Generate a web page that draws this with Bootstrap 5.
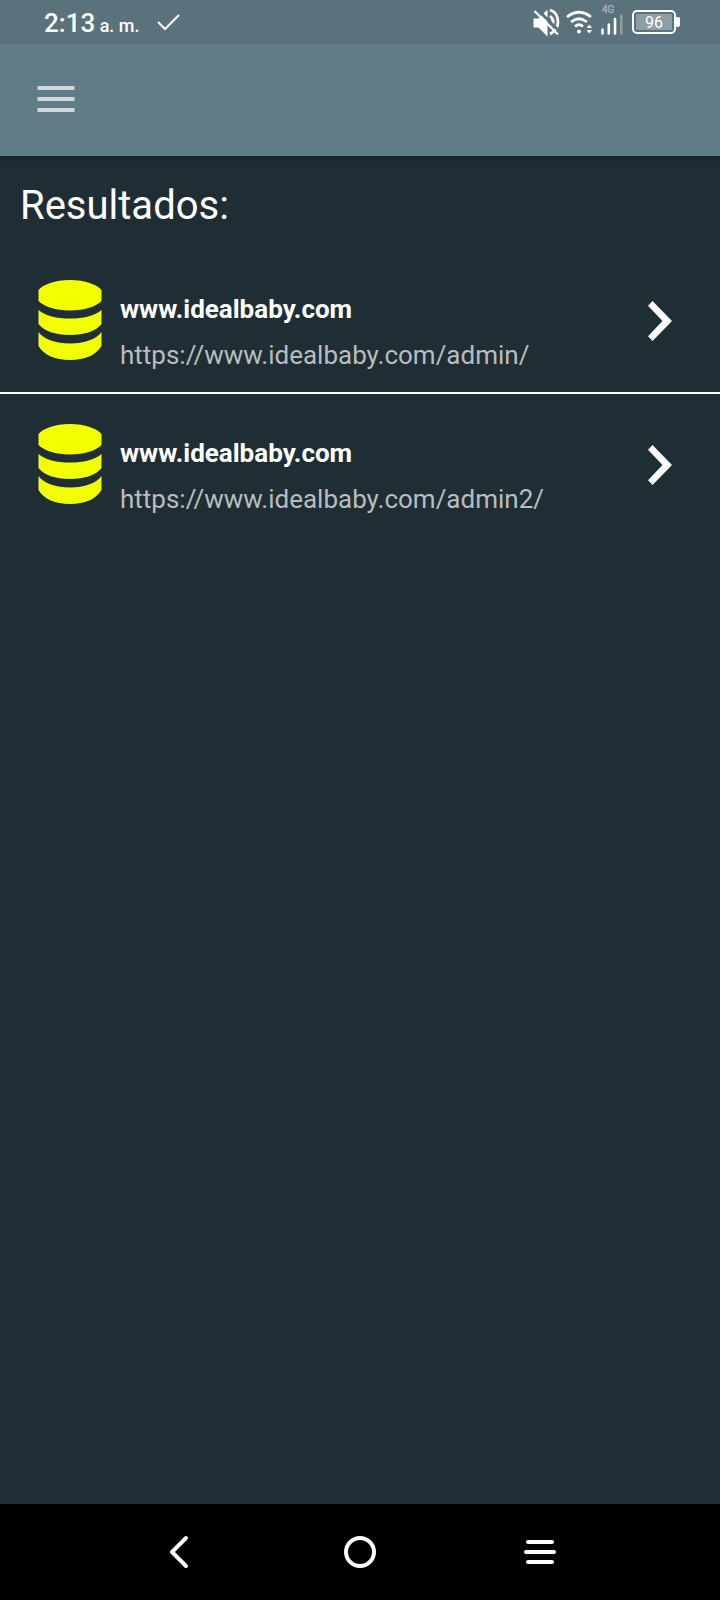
<!DOCTYPE html>
<html lang="es">
<head>
<meta charset="utf-8">
<meta name="viewport" content="width=device-width, initial-scale=1">
<title>Resultados</title>
<link href="https://cdn.jsdelivr.net/npm/bootstrap@5.3.0/dist/css/bootstrap.min.css" rel="stylesheet">
<style>
  body { font-family: Roboto, "Liberation Sans", sans-serif; background: #1f2d34; color: #fff; }
  svg { display: block; flex: none; }
  .status-bar { height: 44px; padding: 0 40px 0 44px; background: #5a727b; }
  .clock { font-size: 26px; line-height: 44px; font-weight: 500; padding-top: 4px; }
  .clock-suffix { font-size: 18px; }
  .battery-text { font-size: 16px; }
  .signal-text { font-size: 10px; }
  .app-bar { height: 112px; padding: 0 32px; background: #607d87; box-shadow: 0 3px 3px #0003; }
  .heading { font-size: 40px; line-height: 48px; padding: 26px 20px 20px; }
  .result { height: 142px; padding: 0 48px 0 38px; gap: 18px; font-size: 26px; line-height: 46px; }
  .result-text { padding-top: 22px; }
  .result-title { font-weight: 700; }
  .result-url { color: #b8bdbf; }
  .results > li + li { border-top: 2px solid #fff; }
  .nav-bar { height: 96px; background: #000; }
</style>
</head>
<body class="d-flex flex-column min-vh-100">

<div class="status-bar d-flex align-items-center justify-content-between">
  <div class="d-flex align-items-center gap-3">
    <div class="clock">2:13<span class="clock-suffix"> a. m.</span></div>
    <svg width="26" height="20" viewBox="0 0 26 20" fill="none" stroke="#fff" stroke-width="2" aria-hidden="true"><path d="M2 10l7 7L23 3"/></svg>
  </div>
  <svg width="148" height="36" viewBox="0 0 148 36" fill="none" stroke="#fff" role="img" aria-label="Silencio, Wi-Fi, 4G, batería 96">
    <g>
      <path d="M1.500 14.500h5l9-9v27l-9-9h-5z" fill="#fff" stroke="none"/>
      <path d="M18 6c5 1.500 8 6 8 12 0 5-2.500 9-8 12" stroke-width="2.800"/>
      <path d="M18 12c2 1.500 3.200 3.500 3.200 6 0 1.500-.4 3-1.200 4" stroke-width="2.800"/>
      <path d="M5 5l23.500 23.500" stroke="#5a727b" stroke-width="3"/>
      <path d="M2.500 7l23.500 23.500" stroke-width="2.200"/>
    </g>
    <path d="M35 13q12-9.500 24 0M39 18q8-6.500 16 0M43 22.500q4-3.500 8 0" stroke-width="2.700"/>
    <circle cx="47" cy="27.500" r="2" fill="#fff" stroke="none"/>
    <path d="M54.500 24l2.800-3.500 2.800 3.500zM54.500 26l2.800 3.500 2.800-3.500z" fill="#fff" stroke="none"/>
    <text class="signal-text" x="70" y="9" fill="#a3b0b5" stroke="#a3b0b5" stroke-width=".4">4G</text>
    <path d="M70.500 29.500v-4M76.800 29.500v-9M83 29.500V15" stroke-width="2.600" stroke-linecap="round"/>
    <path d="M89.300 29.500V11.500" stroke="#8d9ca2" stroke-width="2.600" stroke-linecap="round"/>
    <rect x="101" y="7" width="42" height="22" rx="4" stroke-width="2"/>
    <rect x="104" y="10" width="36" height="16" rx="1" fill="#8d9ea5" stroke="none"/>
    <path d="M144 13h2q2 0 2 2v6q0 2-2 2h-2z" fill="#fff" stroke="none"/>
    <text class="battery-text" x="113" y="24" fill="#fff" stroke="none">96</text>
  </svg>
</div>

<header class="app-bar d-flex align-items-center">
  <button type="button" class="btn p-0 border-0" aria-label="Menú">
    <svg width="48" height="48" viewBox="0 0 48 48" fill="#cfd8db"><path d="M5.500 10h37v4h-37zM5.500 21h37v4h-37zM5.500 32h37v4h-37z"/></svg>
  </button>
</header>

<main class="flex-grow-1">
  <h1 class="heading fw-normal m-0">Resultados:</h1>
  <ul class="results list-unstyled m-0">
    <li>
      <a href="#" class="result d-flex align-items-center text-decoration-none text-white">
        <svg width="64" height="82" viewBox="0 0 64 82" fill="#f2ff00" aria-hidden="true"><path d="M.5 10C5 4.500 17 0 32 0s27 4.500 31.500 10v11C58 26.500 47 30.500 32 30.500S6 26.500.5 21zM.5 30C7 36 19 38.500 32 38.500S57 36 63.500 30v14C58 51 47 55 32 55S6 51 .5 44zM.5 52C6 59.500 18 63.500 32 63.500S58 59.500 63.500 52v14C58 75 47 80 32 80S6 75 .5 66z"/></svg>
        <div class="result-text flex-grow-1"><div class="result-title">www.idealbaby.com</div><div class="result-url">https://www.idealbaby.com/admin/</div></div>
        <svg width="24" height="40" viewBox="0 0 24 40" fill="#fff" aria-hidden="true"><path d="M4.500 0L24 20 4.500 40 0 35.200 14.500 20 0 4.800z"/></svg>
      </a>
    </li>
    <li>
      <a href="#" class="result d-flex align-items-center text-decoration-none text-white">
        <svg width="64" height="82" viewBox="0 0 64 82" fill="#f2ff00" aria-hidden="true"><path d="M.5 10C5 4.500 17 0 32 0s27 4.500 31.500 10v11C58 26.500 47 30.500 32 30.500S6 26.500.5 21zM.5 30C7 36 19 38.500 32 38.500S57 36 63.500 30v14C58 51 47 55 32 55S6 51 .5 44zM.5 52C6 59.500 18 63.500 32 63.500S58 59.500 63.500 52v14C58 75 47 80 32 80S6 75 .5 66z"/></svg>
        <div class="result-text flex-grow-1"><div class="result-title">www.idealbaby.com</div><div class="result-url">https://www.idealbaby.com/admin2/</div></div>
        <svg width="24" height="40" viewBox="0 0 24 40" fill="#fff" aria-hidden="true"><path d="M4.500 0L24 20 4.500 40 0 35.200 14.500 20 0 4.800z"/></svg>
      </a>
    </li>
  </ul>
</main>

<nav class="nav-bar d-flex align-items-center justify-content-center" aria-label="Sistema">
  <div class="row g-0 w-75 text-center">
    <div class="col d-flex justify-content-center"><button type="button" class="btn p-0 border-0" aria-label="Atrás"><svg width="36" height="36" viewBox="0 0 36 36" fill="none" stroke="#fff" stroke-width="4" stroke-linecap="round" stroke-linejoin="round"><path d="M24 4L10 18l14 14"/></svg></button></div>
    <div class="col d-flex justify-content-center"><button type="button" class="btn p-0 border-0" aria-label="Inicio"><svg width="36" height="36" viewBox="0 0 36 36" fill="none" stroke="#fff" stroke-width="4"><circle cx="18" cy="18" r="14"/></svg></button></div>
    <div class="col d-flex justify-content-center"><button type="button" class="btn p-0 border-0" aria-label="Recientes"><svg width="36" height="36" viewBox="0 0 36 36" fill="none" stroke="#fff" stroke-width="4" stroke-linecap="round"><path d="M6 8h24M4 18h28M6 28h24"/></svg></button></div>
  </div>
</nav>

<script src="https://cdn.jsdelivr.net/npm/bootstrap@5.3.0/dist/js/bootstrap.bundle.min.js"></script>
</body>
</html>
